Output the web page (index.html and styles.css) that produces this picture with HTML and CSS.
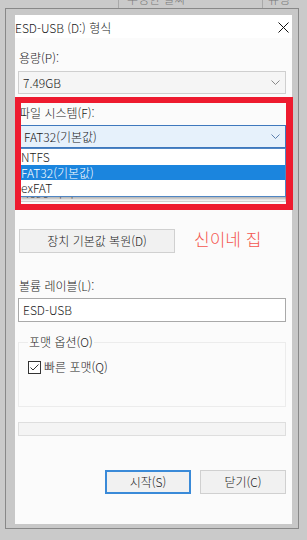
FILE: index.html
```html
<!DOCTYPE html>
<html lang="ko">
<head>
  <meta charset="UTF-8" />
  <meta name="viewport" content="width=device-width, initial-scale=1.0" />
  <title>ESD-USB (D:) 형식</title>
  <link rel="stylesheet" href="styles.css">
</head>
<body>
  <div class="header-strip">
    <span class="col col-date">수정한 날짜</span>
    <span class="col col-type">유형</span>
  </div>

  <div class="frame">
    <div class="dialog">
      <div class="titlebar">
        <span class="title">ESD-USB (D:) 형식</span>
        <svg class="close" width="11" height="11" viewBox="0 0 11 11">
          <path d="M0.5 0.5 L10.5 10.5 M10.5 0.5 L0.5 10.5" stroke="#111" stroke-width="1" fill="none"/>
        </svg>
      </div>

      <div class="content">
        <div class="label first">용량(P):</div>
        <div class="combo">
          <span>7.49GB</span>
          <svg class="chev" width="9" height="5" viewBox="0 0 9 5"><path d="M0.5 0.5 L4.5 4.5 L8.5 0.5" stroke="#888" fill="none"/></svg>
        </div>

        <div class="label">파일 시스템(F):</div>
        <div class="combo active">
          <span>FAT32(기본값)</span>
          <svg class="chev" width="9" height="5" viewBox="0 0 9 5"><path d="M0.5 0.5 L4.5 4.5 L8.5 0.5" stroke="#5a7fae" fill="none"/></svg>
          <ul class="dropdown">
            <li>NTFS</li>
            <li class="selected">FAT32(기본값)</li>
            <li>exFAT</li>
          </ul>
        </div>

        <!-- covered by the open dropdown -->
        <div class="label covered"></div>
        <div class="combo">
          <span class="under-list">4096 바이트</span>
        </div>

        <div class="restore-row">
          <button class="btn restore">장치 기본값 복원(D)</button>
          <span class="note">신이네 집</span>
        </div>

        <div class="label volume">볼륨 레이블(L):</div>
        <div class="input">ESD-USB</div>

        <fieldset class="group">
          <legend>포맷 옵션(O)</legend>
          <label class="check">
            <svg width="13" height="13" viewBox="0 0 13 13">
              <rect x="0.5" y="0.5" width="12" height="12" fill="#fff" stroke="#333"/>
              <path d="M2.5 6.5 L5 9 L10.5 3.5" stroke="#333" stroke-width="1" fill="none"/>
            </svg>
            빠른 포맷(Q)
          </label>
        </fieldset>

        <div class="progress"></div>

        <div class="actions">
          <button class="btn primary">시작(S)</button>
          <button class="btn">닫기(C)</button>
        </div>
      </div>

      <div class="highlight-box"></div>
    </div>
  </div>
</body>
</html>
```

FILE: styles.css
```css
body {
  margin: 0;
  width: 307px;
  height: 540px;
  overflow: hidden;
  background: #cacaca;
  font-family: "Noto Sans CJK KR", "Noto Sans", sans-serif;
  font-size: 12px;
  font-weight: 300;
  color: #1a1a1a;
}

.header-strip {
  height: 8px;
  overflow: hidden;
  display: flex;
  color: #7a7a7a;
  font-size: 12px;
  line-height: 14px;
}
.col {
  margin-top: -8px;
  border-left: 1px solid #a9a9a9;
  padding-left: 8px;
}
.col-date {
  margin-left: 118px;
  width: 135px;
}
.col-type {
  padding-left: 5px;
}

.frame {
  margin-left: 5px;
  width: 278px;
  height: 508px;
  border: 1px solid #888;
  padding: 6px 5px 5px 9px;
  background: #c8c8c8;
}

.dialog {
  position: relative;
  width: 277px;
  height: 509px;
  background: #fbfbfb;
}

.titlebar {
  height: 23px;
  background: #fff;
  display: flex;
  align-items: center;
  justify-content: space-between;
  padding-right: 3px;
}
.title {
  line-height: 16px;
  padding-top: 2px;
}
.close {
  margin-top: 1px;
}

.content {
  padding: 0 6px 0 3px;
}

.label {
  line-height: 16px;
  height: 16px;
  margin-top: 11px;
  padding-left: 1px;
}
.label.first {
  margin-top: 12px;
}
.label.volume {
  margin-top: 25px;
}

.combo {
  position: relative;
  height: 23px;
  box-sizing: border-box;
  margin-top: 5px;
  border: 1px solid #cfcfcf;
  background: #f5f5f5;
  display: flex;
  align-items: center;
  justify-content: space-between;
  padding: 0 4px 0 4px;
  line-height: 16px;
}
.label + .combo {
  margin-top: 4px;
}
.label.first + .combo {
  margin-top: 5px;
}
.combo.active {
  border-color: #3e78bd;
  background: #e6f1fb;
  margin-left: 1px;
}
.chev {
  margin-right: 1px;
}
.under-list {
  margin-top: 4px;
  color: #555;
}

.dropdown {
  position: absolute;
  left: -1px;
  top: 22px;
  width: 265px;
  margin: 0;
  padding: 0;
  list-style: none;
  background: #fff;
  border: 1px solid #4f86c4;
  box-shadow: 2px 2px 2px rgba(0, 0, 0, 0.25);
  z-index: 2;
}
.dropdown li {
  height: 15.6px;
  line-height: 15px;
  padding-left: 1px;
}
.dropdown li.selected {
  background: #1b85de;
  color: #fff;
}

.restore-row {
  display: flex;
  align-items: center;
  margin-top: 27px;
  margin-left: 1px;
}

.btn {
  font-family: inherit;
  font-size: 12px;
  font-weight: 300;
  color: #1a1a1a;
  height: 24px;
  width: 86px;
  box-sizing: border-box;
  background: #f1f1f1;
  border: 1px solid #d0d0d0;
  padding: 0;
  line-height: 16px;
}
.btn.restore {
  width: 156px;
  flex: none;
}
.btn.primary {
  border: 2px solid #3a8ad8;
}

.note {
  margin-left: 19px;
  color: #f4574f;
  font-size: 17px;
  line-height: 20px;
  margin-top: -4px;
  white-space: nowrap;
}

.input {
  height: 24px;
  box-sizing: border-box;
  margin-top: 4px;
  border: 1px solid #a9a9a9;
  background: #fff;
  padding: 0 4px;
  line-height: 22px;
}

.group {
  margin: 12px 0 0 0;
  height: 73px;
  box-sizing: border-box;
  padding: 0 9px;
  border: 1px solid #ececec;
}
.group legend {
  padding: 0 1px;
  line-height: 16px;
  color: #222;
}
.check {
  display: flex;
  align-items: center;
  gap: 3px;
  margin-top: 9px;
  line-height: 16px;
}

.progress {
  height: 14px;
  box-sizing: border-box;
  margin-top: 15px;
  border: 1px solid #dedede;
  background: #f4f4f4;
}

.actions {
  display: flex;
  justify-content: flex-end;
  gap: 9px;
  margin-top: 34px;
}

.highlight-box {
  position: absolute;
  left: 0;
  top: 82px;
  width: 278px;
  height: 113px;
  box-sizing: border-box;
  border: 6px solid #ee1b2f;
  border-right-width: 7px;
  z-index: 3;
}
```
